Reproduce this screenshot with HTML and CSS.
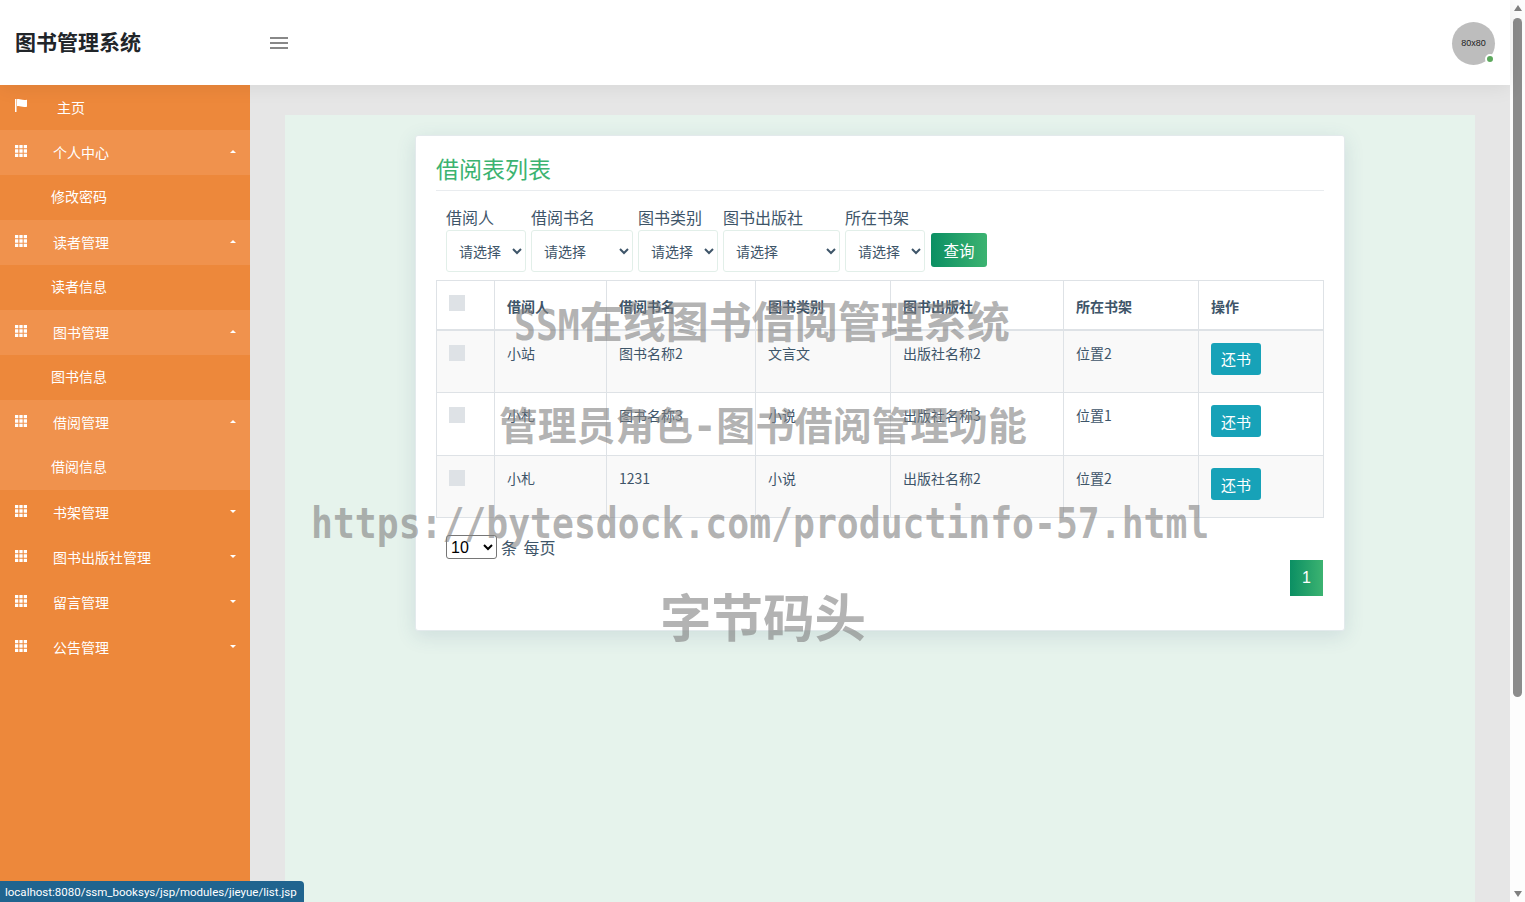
FILE: index.html
```html
<!DOCTYPE html>
<html lang="zh-CN">
<head>
  <meta charset="utf-8" />
  <title>借阅表列表</title>
  <link rel="stylesheet" href="styles.css">
</head>
<body>
<svg class="defs" width="0" height="0">
  <symbol id="grid" viewBox="0 0 12 12">
    <path fill="#fff" d="M0 0h3.3v3.3H0zM4.35 0h3.3v3.3h-3.3zM8.7 0H12v3.3H8.7zM0 4.35h3.3v3.3H0zM4.35 4.35h3.3v3.3h-3.3zM8.7 4.35H12v3.3H8.7zM0 8.7h3.3V12H0zM4.35 8.7h3.3V12h-3.3zM8.7 8.7H12V12H8.7z"/>
  </symbol>
</svg>

<div class="page">
  <div class="app">
    <header class="topbar">
      <div class="logo">图书管理系统</div>
      <div class="burger"><span></span><span></span><span></span></div>
      <div class="avatar">80x80<i class="online"></i></div>
    </header>

    <div class="layout">
      <nav class="sidebar">
        <a class="nav-item home">
          <svg class="nav-icon" viewBox="0 0 12 13"><path fill="#fff" d="M0 0h1.5v13H0zM2 .3c3 -.9 4.500 1.300 10 .4v7c-5 1-7-1.200-10-.4z"/></svg>
          <span>主页</span>
        </a>
        <a class="nav-item open"><svg class="nav-icon"><use href="#grid"/></svg><span>个人中心</span><i class="caret up"></i></a>
        <a class="sub-item">修改密码</a>
        <a class="nav-item open"><svg class="nav-icon"><use href="#grid"/></svg><span>读者管理</span><i class="caret up"></i></a>
        <a class="sub-item">读者信息</a>
        <a class="nav-item open"><svg class="nav-icon"><use href="#grid"/></svg><span>图书管理</span><i class="caret up"></i></a>
        <a class="sub-item">图书信息</a>
        <a class="nav-item open"><svg class="nav-icon"><use href="#grid"/></svg><span>借阅管理</span><i class="caret up"></i></a>
        <a class="sub-item hover">借阅信息</a>
        <a class="nav-item"><svg class="nav-icon"><use href="#grid"/></svg><span>书架管理</span><i class="caret"></i></a>
        <a class="nav-item"><svg class="nav-icon"><use href="#grid"/></svg><span>图书出版社管理</span><i class="caret"></i></a>
        <a class="nav-item"><svg class="nav-icon"><use href="#grid"/></svg><span>留言管理</span><i class="caret"></i></a>
        <a class="nav-item"><svg class="nav-icon"><use href="#grid"/></svg><span>公告管理</span><i class="caret"></i></a>
      </nav>

      <main class="main">
        <div class="panel">
          <section class="card">
            <h3 class="card-title">借阅表列表</h3>

            <form class="filters">
              <div class="field w80">
                <label>借阅人</label>
                <select><option>请选择</option></select>
              </div>
              <div class="field w102">
                <label>借阅书名</label>
                <select><option>请选择</option></select>
              </div>
              <div class="field w80">
                <label>图书类别</label>
                <select><option>请选择</option></select>
              </div>
              <div class="field w117">
                <label>图书出版社</label>
                <select><option>请选择</option></select>
              </div>
              <div class="field w80">
                <label>所在书架</label>
                <select><option>请选择</option></select>
              </div>
              <button type="button" class="btn-search">查询</button>
            </form>

            <table class="list">
              <colgroup>
                <col class="c1"><col class="c2"><col class="c3"><col class="c4"><col class="c5"><col class="c6"><col class="c7">
              </colgroup>
              <thead>
                <tr>
                  <th class="check"><i class="box"></i></th>
                  <th>借阅人</th>
                  <th>借阅书名</th>
                  <th>图书类别</th>
                  <th>图书出版社</th>
                  <th>所在书架</th>
                  <th>操作</th>
                </tr>
              </thead>
              <tbody>
                <tr class="r63">
                  <td class="check"><i class="box"></i></td>
                  <td>小站</td>
                  <td>图书名称2</td>
                  <td>文言文</td>
                  <td>出版社名称2</td>
                  <td>位置2</td>
                  <td><button type="button" class="btn-return">还书</button></td>
                </tr>
                <tr class="r63">
                  <td class="check"><i class="box"></i></td>
                  <td>小札</td>
                  <td>图书名称3</td>
                  <td>小说</td>
                  <td>出版社名称3</td>
                  <td>位置1</td>
                  <td><button type="button" class="btn-return">还书</button></td>
                </tr>
                <tr class="r62">
                  <td class="check"><i class="box"></i></td>
                  <td>小札</td>
                  <td>1231</td>
                  <td>小说</td>
                  <td>出版社名称2</td>
                  <td>位置2</td>
                  <td><button type="button" class="btn-return">还书</button></td>
                </tr>
              </tbody>
            </table>

            <div class="page-size">
              <select><option>10</option></select>
              <span>条 每页</span>
            </div>
            <div class="pager"><a class="page-num">1</a></div>
          </section>
        </div>
      </main>
    </div>
  </div>

  <div class="scrollbar">
    <i class="arrow-up"></i>
    <div class="track"><div class="thumb"></div></div>
    <i class="arrow-down"></i>
  </div>
</div>

<div class="status">localhost:8080/ssm_booksys/jsp/modules/jieyue/list.jsp</div>

<div class="wm wm1"><span class="wm-latin">SSM</span>在线图书借阅管理系统</div>
<div class="wm wm2">管理员角色-图书借阅管理功能</div>
<div class="wm wm3">https://bytesdock.com/productinfo-57.html</div>
<div class="wm wm4">字节码头</div>
</body>
</html>
```

FILE: styles.css
```css
* {
  box-sizing: border-box;
}

html, body {
  margin: 0;
  height: 902px;
  overflow: hidden;
}

body {
  font-family: "Noto Sans CJK SC", "Liberation Sans", sans-serif;
  font-size: 14px;
  color: #3e5569;
  background: #e6e6e6;
}

.defs {
  position: absolute;
}

.page {
  display: flex;
  height: 902px;
}

.app {
  flex: 1;
  min-width: 0;
  display: flex;
  flex-direction: column;
}

/* top bar */
.topbar {
  height: 85px;
  background: #fff;
  display: flex;
  align-items: center;
  padding-right: 15px;
  position: relative;
  z-index: 2;
  box-shadow: 0 1px 20px rgba(0, 0, 0, 0.08);
}

.logo {
  width: 250px;
  padding: 0 0 4px 15px;
  font-size: 21px;
  font-weight: 700;
  color: #212529;
}

.burger {
  margin-left: 20px;
  width: 18px;
  display: flex;
  flex-direction: column;
  gap: 3px;
}

.burger span {
  height: 2px;
  background: #888;
}

.avatar {
  margin: 1px 0 0 auto;
  width: 43px;
  height: 43px;
  border-radius: 50%;
  background: #bdbdbd;
  color: #222;
  font-family: "Liberation Sans", sans-serif;
  font-size: 9px;
  display: flex;
  align-items: center;
  justify-content: center;
  position: relative;
}

.online {
  position: absolute;
  right: 0;
  bottom: 1px;
  width: 10px;
  height: 10px;
  border-radius: 50%;
  background: #5ca85c;
  border: 2px solid #fff;
}

.layout {
  flex: 1;
  display: flex;
  min-height: 0;
}

/* sidebar */
.sidebar {
  width: 250px;
  background: #ed883b;
  flex-shrink: 0;
}

.nav-item {
  height: 45px;
  display: flex;
  align-items: center;
  padding: 0 14px 2px 15px;
  color: #fff;
}

.nav-item span {
  margin-left: 26px;
}

.nav-item.home span {
  margin-left: 30px;
}

.nav-item.open,
.sub-item.hover {
  background: #f0924d;
}

.nav-icon {
  width: 12px;
  height: 12px;
  margin-top: -2px;
  flex-shrink: 0;
}

.home .nav-icon {
  height: 13px;
}

.caret {
  margin-left: auto;
  border-left: 3.5px solid transparent;
  border-right: 3.5px solid transparent;
  border-top: 3.5px solid #fff;
}

.caret.up {
  border-top: 0;
  border-bottom: 3.5px solid #fff;
}

.sub-item {
  height: 45px;
  display: flex;
  align-items: center;
  padding: 0 0 4px 51px;
  color: #fff;
}

/* content */
.main {
  flex: 1;
  min-width: 0;
  padding: 30px 35px 0;
}

.panel {
  height: 100%;
  background: #e6f3ec;
  padding: 20px 130px 0;
}

.card {
  height: 496px;
  background: #fff;
  border: 1px solid #e3eaec;
  border-radius: 3px;
  padding: 19px 20px 20px;
  box-shadow: 0 5px 20px rgba(60, 90, 130, 0.14);
}

.card-title {
  margin: 0;
  height: 36px;
  font-size: 23px;
  font-weight: 400;
  line-height: 26px;
  color: #3cb371;
  border-bottom: 1px solid #e9ecef;
}

.filters {
  display: flex;
  align-items: flex-end;
  margin: 15px 0 8px;
  padding-left: 10px;
}

.field {
  margin-right: 5px;
  display: flex;
  flex-direction: column;
}

.field label {
  height: 24px;
  line-height: 22px;
  font-size: 16px;
  white-space: nowrap;
}

.field select {
  width: 100%;
  height: 42px;
  padding: 0 8px;
  font-family: inherit;
  font-size: 14px;
  color: #3e5569;
  background: #fff;
  border: 1px solid #e2efe9;
  border-radius: 3px;
}

.w80 { width: 80px; }
.w102 { width: 102px; }
.w117 { width: 117px; }

.btn-search {
  width: 56px;
  height: 34px;
  margin: 0 0 5px 1px;
  padding: 0;
  border: 0;
  border-radius: 3px;
  background: linear-gradient(90deg, #0b8f63, #3cb371);
  color: #fff;
  font-family: inherit;
  font-size: 15.5px;
}

/* table */
.list {
  width: 887px;
  table-layout: fixed;
  border-collapse: collapse;
}

.c1 { width: 58px; }
.c2 { width: 112px; }
.c3 { width: 149px; }
.c4 { width: 135px; }
.c5 { width: 173px; }
.c6 { width: 135px; }
.c7 { width: 125px; }

.list th,
.list td {
  border: 1px solid #dee2e6;
  padding: 12px;
  line-height: 21px;
  text-align: left;
  vertical-align: top;
}

.list th {
  height: 49px;
  font-weight: 700;
  font-size: 14px;
  vertical-align: bottom;
  border-bottom-width: 2px;
}

.list th.check,
.list td.check {
  vertical-align: top;
  padding-top: 14px;
}

.list tbody tr:nth-child(odd) {
  background: #f9f9f9;
}

.r62 { height: 62px; }
.r63 { height: 63px; }

.box {
  display: block;
  width: 16px;
  height: 16px;
  background: #dee2e6;
}

.btn-return {
  display: block;
  width: 50px;
  height: 32px;
  padding: 0;
  border: 0;
  border-radius: 3px;
  background: #17a2b8;
  color: #fff;
  font-family: inherit;
  font-size: 15px;
}

.page-size {
  display: flex;
  align-items: center;
  gap: 4px;
  margin: 17px 0 0 10px;
  font-size: 16px;
  word-spacing: 3px;
}

.page-size span {
  line-height: 20px;
}

.page-size select {
  width: 51px;
  height: 24px;
  font-family: "Liberation Sans", sans-serif;
  font-size: 16px;
  color: #000;
  background: #fff;
  border: 1px solid #767676;
  border-radius: 3px;
}

.pager {
  display: flex;
  justify-content: flex-end;
  padding-right: 1px;
  margin-top: 1px;
}

.page-num {
  width: 33px;
  height: 36px;
  display: flex;
  align-items: center;
  justify-content: center;
  background: linear-gradient(90deg, #0b8f63, #3cb371);
  color: #fff;
  font-family: "Liberation Sans", sans-serif;
  font-size: 16px;
}

/* browser bits */
.scrollbar {
  width: 15px;
  background: #fdfdfd;
  display: flex;
  flex-direction: column;
  align-items: center;
  padding: 5px 0 5px;
}

.arrow-up,
.arrow-down {
  border-left: 4.500px solid transparent;
  border-right: 4.500px solid transparent;
}

.arrow-up {
  border-bottom: 6px solid #808080;
}

.arrow-down {
  border-top: 6px solid #808080;
}

.track {
  flex: 1;
  width: 100%;
  display: flex;
  justify-content: center;
  padding-top: 7px;
}

.thumb {
  width: 9px;
  height: 679px;
  border-radius: 5px;
  background: #8c8c8c;
}

.status {
  position: absolute;
  left: 0;
  bottom: 0;
  height: 21px;
  width: 304px;
  padding-left: 5px;
  line-height: 22px;
  font-family: Roboto, "Liberation Sans", sans-serif;
  font-size: 11.5px;
  white-space: nowrap;
  color: #fff;
  background: #20648f;
  border-top-right-radius: 4px;
  z-index: 5;
}

/* watermark text lying over the page */
.wm {
  position: absolute;
  z-index: 4;
  pointer-events: none;
  white-space: nowrap;
  font-family: "DejaVu Sans Mono", "Noto Sans CJK SC", monospace;
  font-weight: 700;
  line-height: 1;
  color: rgba(128, 128, 128, 0.6);
}

.wm-latin {
  font-size: 36.4px;
  display: inline-block;
  transform: scaleY(1.15);
}

.wm1 {
  left: 514px;
  top: 302px;
  font-size: 43px;
}

.wm2 {
  left: 499px;
  top: 408px;
  font-size: 38.8px;
}

.wm3 {
  left: 311px;
  top: 506px;
  font-size: 36.4px;
  transform: scaleY(1.15);
}

.wm4 {
  left: 660px;
  top: 594px;
  font-size: 51.5px;
}
```
